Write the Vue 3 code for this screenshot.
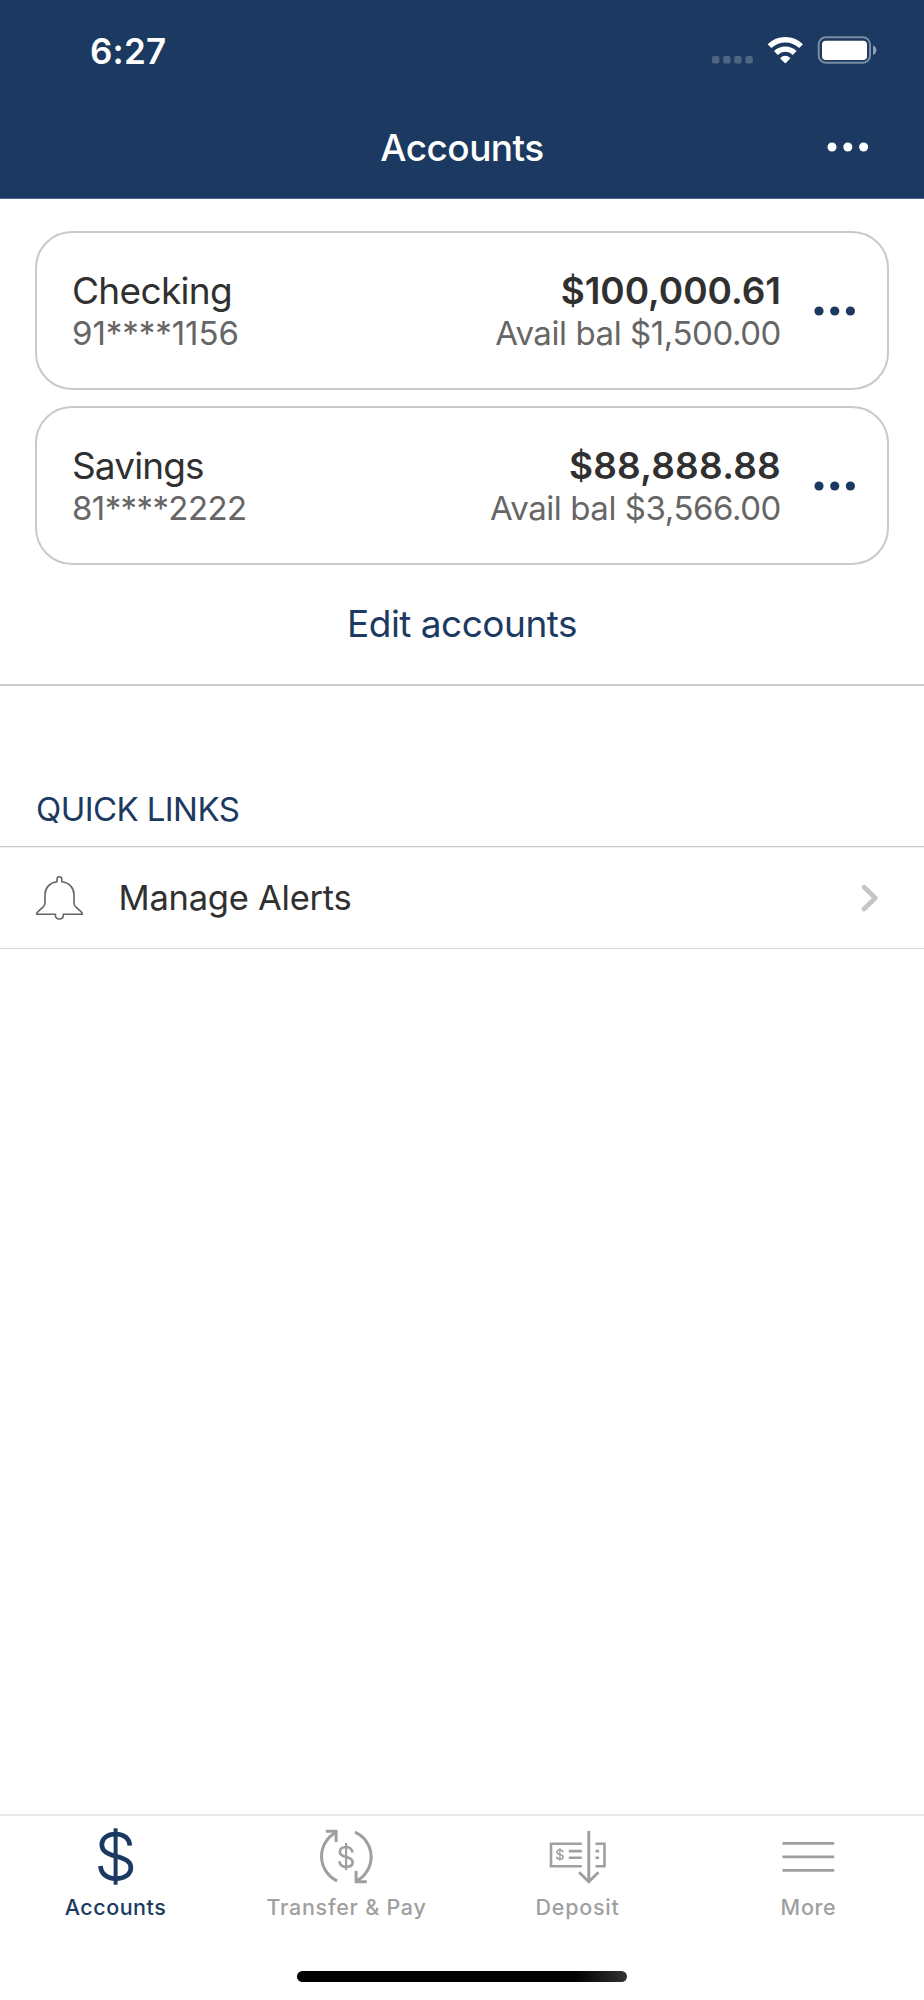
<script setup>
const accounts = [
  { id: 'checking', name: 'Checking', number: '91****1156', balance: '$100,000.61', available: '$1,500.00' },
  { id: 'savings', name: 'Savings', number: '81****2222', balance: '$88,888.88', available: '$3,566.00' }
]
const tabs = [
  { id: 'accounts', label: 'Accounts', active: true },
  { id: 'transfer', label: 'Transfer & Pay' },
  { id: 'deposit', label: 'Deposit' },
  { id: 'more', label: 'More' }
]
</script>

<template>
  <div class="screen">
    <header class="header">
      <div class="status">
        <span class="time">6:27</span>
        <svg class="indicators" width="165" height="28" viewBox="0 0 165 28" fill="#fff">
          <g opacity=".22">
            <rect x="0" y="20" width="7.4" height="7.4" rx="2" />
            <rect x="11.1" y="20" width="7.4" height="7.4" rx="2" />
            <rect x="22.2" y="20" width="7.4" height="7.4" rx="2" />
            <rect x="33.4" y="20" width="7.4" height="7.4" rx="2" />
          </g>
          <g fill="none" stroke="#fff">
            <path d="M57.5 10.2A22.5 22.5 0 0 1 89.1 10.2" stroke-width="5.4" />
            <path d="M63.9 17A13.4 13.4 0 0 1 82.7 17" stroke-width="5.4" />
            <rect x="106.7" y="1.3" width="51.3" height="25.4" rx="7" stroke-width="2" opacity=".42" />
          </g>
          <path d="M68 22.2Q73.3 17.4 78.5 22.2L73.8 27Q73.3 27.5 72.8 27Z" />
          <rect x="110" y="4.8" width="45" height="19.2" rx="3.8" />
          <path d="M161 9.5Q164.4 10.7 164.4 14.2T161 19Z" opacity=".5" />
        </svg>
      </div>
      <div class="titlebar">
        <h1 class="title">Accounts</h1>
        <svg class="menu" width="42" height="10" viewBox="0 0 42 10" fill="#fff">
          <circle cx="5" cy="5" r="4.5" /><circle cx="20.8" cy="5" r="4.5" /><circle cx="36.6" cy="5" r="4.5" />
        </svg>
      </div>
    </header>

    <main class="content">
      <section class="cards">
        <article v-for="a in accounts" :key="a.id" class="card">
          <div class="info">
            <div class="name" :class="a.id">{{ a.name }}</div>
            <div class="number" :class="a.id">{{ a.number }}</div>
          </div>
          <div class="amounts">
            <div class="balance" :class="a.id">{{ a.balance }}</div>
            <div class="available">Avail bal {{ a.available }}</div>
          </div>
          <svg class="dots" width="42" height="10" viewBox="0 0 42 10" fill="#1c3a61">
            <circle cx="5" cy="5" r="4.6" /><circle cx="20.7" cy="5" r="4.6" /><circle cx="36.4" cy="5" r="4.6" />
          </svg>
        </article>
      </section>
      <div class="edit"><span>Edit accounts</span></div>

      <h2 class="section-title">QUICK LINKS</h2>
      <div class="link">
        <svg class="bell" width="47" height="44" viewBox="0 0 47 44" fill="none" stroke="#666" stroke-width="1.6" stroke-linejoin="round">
          <path d="M21 5.8V3.2Q21 .8 23.4 .8T25.8 3.2V5.8C33.5 6.8 38 12 38 18.5V26.5Q38 29.2 39.5 30.7L45.2 35.8Q46.3 36.8 46.3 38.3H27.3V39.3Q27.3 43 23.4 43T19.4 39.3V38.3H.7Q.7 36.8 1.8 35.8L7.4 30.7Q9 29.2 9 26.5V18.5C9 12 13.5 6.8 21 5.8Z" />
        </svg>
        <span class="link-label">Manage Alerts</span>
        <svg class="chevron" width="18" height="30" viewBox="0 0 18 30" fill="none" stroke="#c5c5c7" stroke-width="4.6" stroke-linecap="round" stroke-linejoin="round">
          <path d="M4 4L15.3 15L4 26" />
        </svg>
      </div>
    </main>

    <footer class="footer">
      <nav class="tabs">
        <div v-for="t in tabs" :key="t.id" class="tab" :class="{ active: t.active }">
          <svg width="80" height="72" viewBox="0.7 0 80 72" fill="none" stroke="currentColor">
            <template v-if="t.id === 'accounts'">
              <path d="M40.3 8.3V64.7" stroke-width="4" />
              <path d="M54.5 25.7C54.2 18.5 48.5 14 40.5 14C32 14 26.5 18.5 26.5 24.5C26.5 31 31.5 33.8 40.5 36.2C50.5 38.8 55.5 41.5 55.5 47.5C55.5 54.5 49.5 58.7 40.5 58.7C31.5 58.7 25.6 53.5 25.2 46" stroke-width="4.7" />
            </template>
            <template v-else-if="t.id === 'transfer'">
              <path d="M30.8 60.8A27 27 0 0 1 29.8 12.4M19.5 11.3H29.8V22M48.7 12.2A27 27 0 0 1 50 61M49.8 51V61.7H60.5" stroke-width="3" />
              <path d="M39.8 23V50" stroke-width="2.2" />
              <path d="M46 32.5C45.8 29 43.2 27 39.8 27C36 27 33.5 29 33.5 32C33.5 35 36 36 39.8 37C44 38 46.3 39.2 46.3 42.2C46.3 45 44 46.8 39.8 46.8C35.8 46.8 33.4 44.8 33.2 41.2" stroke-width="2.7" />
            </template>
            <template v-else-if="t.id === 'deposit'">
              <path d="M44.5 23.7H13.7V46.3H44.5M58.2 23.7H67.2V46.3H58.2M31.5 31.1H44.5M31.5 37.8H44.5M58.2 31.1H61.8M58.2 37.8H61.8" stroke-width="2.6" />
              <path d="M51.5 11V61.5M41.8 52.3L51.5 61.8L61.2 52.3" stroke-width="2.9" />
              <path d="M22.6 28.2V40.8" stroke-width="1.3" />
              <path d="M25.7 32.4C25.5 30.8 24.3 30 22.6 30C20.8 30 19.7 30.9 19.7 32.2C19.7 33.7 20.9 34 22.6 34.4C24.6 34.9 25.8 35.4 25.8 36.9C25.8 38.3 24.6 39.1 22.6 39.1C20.7 39.1 19.5 38.2 19.4 36.6" stroke-width="1.5" />
            </template>
            <path v-else d="M14.1 23.4H65.9M14.1 36.8H65.9M14.1 50.3H65.9" stroke-width="2.8" />
          </svg>
          <span class="tab-label" :class="t.id">{{ t.label }}</span>
        </div>
      </nav>
      <div class="home"></div>
    </footer>
  </div>
</template>

<style>
body { background: #fff; }
</style>

<style scoped>
.screen { display: flex; flex-direction: column; width: 924px; height: 2000px; background: #fff; font-family: Inter, sans-serif; color: #303030; overflow: hidden; }
.header { flex: none; box-sizing: border-box; height: 199px; background: #1c3a61; border-bottom: 1px solid #4e6685; color: #fff; }
.status { display: flex; align-items: center; justify-content: space-between; height: 101px; padding: 0 47px 0 90px; }
.time { font-size: 35px; font-weight: 560; letter-spacing: .2px; line-height: 102px; }
.indicators { margin-bottom: 1px; }
.titlebar { display: grid; grid-template-columns: 1fr auto 1fr; align-items: center; height: 94px; padding: 0 55px; }
.title { grid-column: 2; margin: 0; font-size: 37px; font-weight: 500; letter-spacing: -.55px; line-height: 94px; }
.menu { justify-self: end; margin-bottom: 2px; }

.content { flex: 1; }
.cards { display: flex; flex-direction: column; gap: 16px; padding: 32px 35px 0; }
.card { display: flex; align-items: center; box-sizing: border-box; height: 159px; padding: 0 31px 0 35px; border: 2px solid #c9c9c9; border-radius: 37px; }
.info { flex: 1; }
.amounts { text-align: right; }
.info, .amounts { margin-top: 8px; height: 89px; }
.name, .balance { font-size: 37px; line-height: 42px; }
.name.checking { letter-spacing: -.68px; }
.name.savings { letter-spacing: -.88px; }
.number, .available { font-size: 33px; line-height: 43px; color: #666; }
.number.checking { letter-spacing: -.05px; }
.number.savings { letter-spacing: -.6px; }
.balance { font-weight: 600; letter-spacing: -.02px; }
.balance.savings { letter-spacing: .22px; }
.available { letter-spacing: -.43px; }
.dots { margin-left: 33px; }
.edit { height: 119px; border-bottom: 2px solid #ccc; text-align: center; font-size: 37px; line-height: 117px; letter-spacing: -.51px; color: #1c3a61; }
.section-title { margin: 88px 0 0; padding-left: 36px; height: 72px; border-bottom: 1px solid #c6c6c6; font-size: 33px; font-weight: 400; line-height: 70px; letter-spacing: -.58px; color: #1c3a61; }
.link { display: flex; align-items: center; height: 100px; padding: 0 46px 0 36px; border-top: 1px solid #efefef; border-bottom: 1px solid #d8d8d8; }
.link-label { flex: 1; margin-left: 35.5px; font-size: 34.5px; letter-spacing: -.25px; line-height: 100px; }

.footer { flex: none; box-sizing: border-box; height: 186px; border-top: 2px solid #e9e9e9; display: flex; flex-direction: column; align-items: center; }
.tabs { display: grid; grid-template-columns: repeat(4, 231px); height: 155px; }
.tab { display: flex; flex-direction: column; align-items: center; padding-top: 4px; color: #9f9f9f; }
.tab.active { color: #1c3a61; }
.tab-label { font-size: 21.5px; font-weight: 500; line-height: 30px; letter-spacing: .74px; }
.tab-label.accounts { letter-spacing: .52px; }
.tab-label.more { letter-spacing: .66px; }
.home { width: 330px; height: 11px; border-radius: 6px; background: linear-gradient(90deg, #000 84%, #333 100%); }
</style>
